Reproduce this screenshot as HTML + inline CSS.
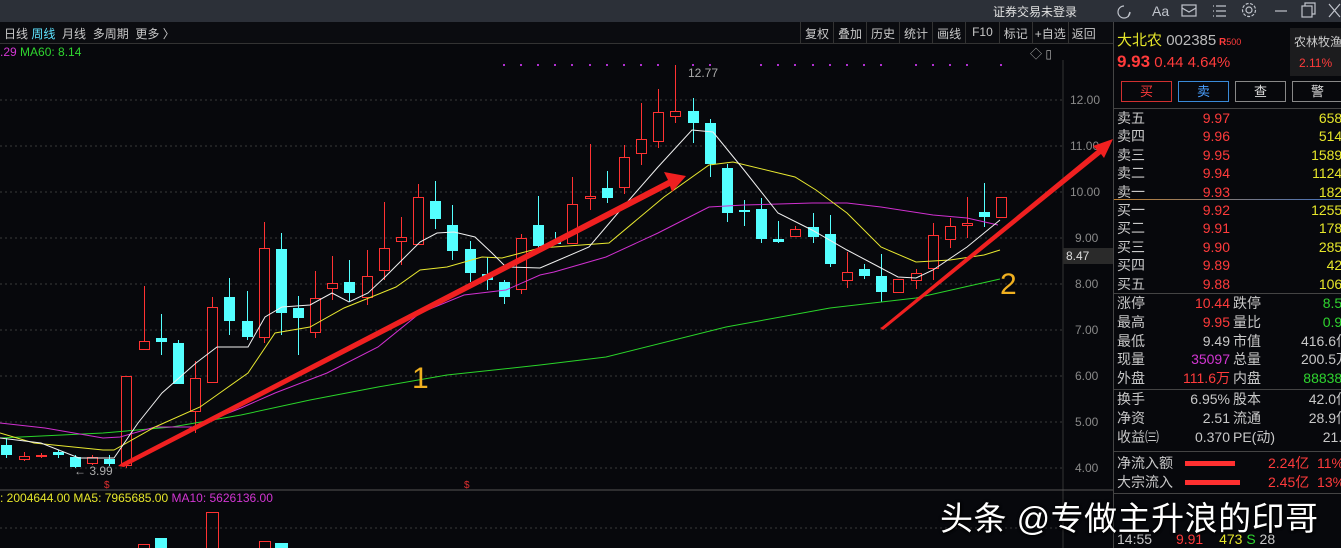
<!DOCTYPE html>
<html><head><meta charset="utf-8">
<style>
*{margin:0;padding:0;box-sizing:border-box}
body{width:1341px;height:548px;overflow:hidden;background:#07080c;font-family:"Liberation Sans","Noto Sans CJK SC",sans-serif;font-size:13px;color:#c8c8c8;position:relative}
.a{position:absolute;white-space:nowrap}
.r{text-align:right}
.red{color:#ff3b3b}.yel{color:#e6e62a}.grn{color:#2fd52f}.mag{color:#d236d2}.gry{color:#c8c8c8}
</style></head><body>
<div class="a" style="left:0;top:0;width:1341px;height:22px;background:#2c3038"></div>
<div class="a" style="left:993px;top:3px;font-size:12px;color:#e0e0e0">证券交易未登录</div>
<svg class="a" style="left:1110px;top:0" width="231" height="22" fill="none" stroke="#c0c4cc" stroke-width="1.2">
<path d="M14 6a6 6 0 1 0 6 6" /><path d="M20 12l-2 5"/>
<text x="42" y="16" fill="#c0c4cc" stroke="none" font-size="14" font-family="Liberation Sans">Aa</text>
<rect x="72" y="5" width="14" height="11"/><path d="M72 8l7 4 7-4"/>
<path d="M106 6h10M106 11h10M106 16h10M103 6h1M103 11h1M103 16h1"/>
<circle cx="139" cy="10" r="3"/><circle cx="139" cy="10" r="6.5" stroke-dasharray="3 1.5"/>
<path d="M165 11h12"/><rect x="192" y="6" width="10" height="11"/><path d="M195 6V3h10v11h-3"/>
<path d="M219 4l11 13M230 4l-11 13"/>
</svg>
<div class="a" style="left:0;top:22px;width:1113px;height:22px;background:#0b0c10;border-bottom:1px solid #333"></div>
<div class="a" style="left:4px;top:25px;font-size:12px">日线 <span style="color:#5ee3ff">周线</span> &nbsp;月线 &nbsp;多周期 &nbsp;更多 〉</div>
<div class="a" style="left:800px;top:22px;height:22px;display:flex;font-size:12px">
<span style="border-left:1px solid #333;padding:3px 4px">复权</span><span style="border-left:1px solid #333;padding:3px 4px">叠加</span><span style="border-left:1px solid #333;padding:3px 4px">历史</span><span style="border-left:1px solid #333;padding:3px 4px">统计</span><span style="border-left:1px solid #333;padding:3px 4px">画线</span><span style="border-left:1px solid #333;padding:3px 6px">F10</span><span style="border-left:1px solid #333;padding:3px 4px">标记</span><span style="border-left:1px solid #333;padding:3px 2px">+自选</span><span style="border-left:1px solid #333;padding:3px 3px">返回</span></div>
<div class="a" style="left:0;top:45px;font-size:12px"><span class="mag">.29</span> <span class="grn">MA60: 8.14</span></div>
<div class="a" style="left:1030px;top:45px;font-size:12px;color:#aaa">◇ ▯</div>

<svg class="a" style="left:0;top:44px" width="1113" height="504">
<g stroke="#3a3a3a" stroke-dasharray="2 3">
<line x1="0" y1="56" x2="1063" y2="56"/><line x1="0" y1="102" x2="1063" y2="102"/><line x1="0" y1="148" x2="1063" y2="148"/><line x1="0" y1="194" x2="1063" y2="194"/><line x1="0" y1="240" x2="1063" y2="240"/><line x1="0" y1="286" x2="1063" y2="286"/><line x1="0" y1="332" x2="1063" y2="332"/><line x1="0" y1="378" x2="1063" y2="378"/><line x1="0" y1="424" x2="1063" y2="424"/><line x1="0" y1="484" x2="1063" y2="484"/>
</g>
<line x1="1063" y1="16" x2="1063" y2="504" stroke="#333"/>
<line x1="0" y1="446" x2="1113" y2="446" stroke="#555"/>
<g fill="#8a8a8a" font-size="12" font-family="Liberation Sans">
<text x="1070" y="60">12.00</text><text x="1070" y="106">11.00</text><text x="1070" y="152">10.00</text><text x="1075" y="198">9.00</text><text x="1075" y="244">8.00</text><text x="1075" y="290">7.00</text><text x="1075" y="336">6.00</text><text x="1075" y="382">5.00</text><text x="1075" y="428">4.00</text>
</g>
<rect x="1063" y="204" width="50" height="16" fill="#2a2a2a"/><text x="1066" y="216" fill="#ddd" font-size="12" font-family="Liberation Sans">8.47</text>
<g fill="#b030d0">
<rect x="503" y="20" width="2" height="2"/><rect x="520" y="20" width="2" height="2"/><rect x="537" y="20" width="2" height="2"/><rect x="554" y="20" width="2" height="2"/><rect x="571" y="20" width="2" height="2"/><rect x="589" y="20" width="2" height="2"/><rect x="606" y="20" width="2" height="2"/><rect x="623" y="20" width="2" height="2"/><rect x="640" y="20" width="2" height="2"/><rect x="657" y="20" width="2" height="2"/><rect x="692" y="20" width="2" height="2"/><rect x="709" y="20" width="2" height="2"/><rect x="760" y="20" width="2" height="2"/><rect x="777" y="20" width="2" height="2"/><rect x="794" y="20" width="2" height="2"/><rect x="812" y="20" width="2" height="2"/><rect x="829" y="20" width="2" height="2"/><rect x="846" y="20" width="2" height="2"/><rect x="863" y="20" width="2" height="2"/><rect x="880" y="20" width="2" height="2"/><rect x="915" y="20" width="2" height="2"/><rect x="932" y="20" width="2" height="2"/><rect x="949" y="20" width="2" height="2"/><rect x="966" y="20" width="2" height="2"/><rect x="1000" y="20" width="2" height="2"/>
</g>
<text x="688" y="33" fill="#aaa" font-size="12" font-family="Liberation Sans">12.77</text>
<text x="74" y="431" fill="#aaa" font-size="12" font-family="Liberation Sans">← 3.99</text>
<text x="104" y="444" fill="#e03030" font-size="10">$</text><text x="464" y="444" fill="#e03030" font-size="10">$</text>
</svg>

<svg class="a" style="left:0;top:0" width="1113" height="548" id="c">
<g id="candles"></g>
<g fill="none" stroke-width="1">
<polyline stroke="#2ad42a" points="0,438 103,433 172,427 241,415 310,400 378,387 447,375 540,365 606,357 726,327 830,308 916,298 1000,279"/>
<polyline stroke="#d030d0" points="0,423 45,428 103,438 120,437 155,427 193,427 241,408 275,393 327,373 378,347 420,313 464,295 506,290 540,275 554,272 606,257 658,233 709,207 744,205 812,203 847,203 881,207 933,215 967,218 998,225"/>
<polyline stroke="#e8e830" points="0,433 34,443 103,450 114,450 155,427 200,407 248,373 275,333 310,327 344,308 396,287 420,270 447,267 482,257 502,258 540,248 609,243 664,197 709,165 733,162 795,177 816,190 847,213 881,247 916,262 950,260 984,255 1000,250"/>
<polyline stroke="#f0f0f0" points="0,438 41,443 79,458 114,458 138,423 162,393 196,363 217,347 248,347 265,317 282,307 310,305 332,293 349,302 368,293 385,277 402,260 420,242 437,233 454,232 475,237 492,253 506,267 540,268 554,262 589,247 623,207 658,167 692,130 713,132 744,170 778,213 812,230 847,250 881,268 898,277 916,278 933,270 967,247 1000,220"/>
</g>
<polygon fill="#f02020" points="118,466 122,463 668,180 664,172 686,176 672,192 670,186 124,467"/>
<polygon fill="#f02020" points="880,328 882,327 1097,150 1093,146 1113,139 1104,158 1101,154 883,330"/>
<text x="412" y="388" fill="#f0b020" font-size="30" font-family="Liberation Sans">1</text>
<text x="1000" y="294" fill="#f0b020" font-size="30" font-family="Liberation Sans">2</text>
<rect x="138.5" y="544.5" width="11" height="4" fill="none" stroke="#ff3232"/>
<rect x="155" y="538" width="12" height="10" fill="#54ffff"/>
<rect x="206.5" y="512.5" width="12" height="36" fill="none" stroke="#ff3232"/>
<rect x="259.5" y="541.5" width="11" height="7" fill="none" stroke="#ff3232"/>
<rect x="275" y="543" width="13" height="5" fill="#54ffff"/>
</svg>
<div class="a" style="left:0;top:491px;font-size:12px"><span class="yel">: 2004644.00 MA5: 7965685.00</span> <span class="mag">MA10: 5626136.00</span></div>

<div class="a" style="left:1113px;top:22px;width:1px;height:526px;background:#444"></div>
<div class="a" style="left:1117px;top:29px;font-size:15px"><span class="yel">大北农</span> <span style="color:#bbb">002385</span><span class="red" style="font-size:10px;font-weight:bold"> R</span><span class="red" style="font-size:9px">500</span></div>
<div class="a" style="left:1290px;top:28px;width:51px;height:48px;background:#1c1c1e"></div>
<div class="a" style="left:1294px;top:33px;font-size:12px;color:#ccc">农林牧渔</div>
<div class="a red" style="left:1299px;top:56px;font-size:12px">2.11%</div>
<div class="a red" style="left:1117px;top:52px;font-size:15px"><b style="font-size:17px">9.93</b> 0.44 4.64%</div>
<div class="a" style="left:1121px;top:81px;width:51px;height:21px;border:1px solid #d03030;color:#ff3b3b;text-align:center;line-height:19px">买</div>
<div class="a" style="left:1178px;top:81px;width:51px;height:21px;border:1px solid #3a8ad8;color:#4aa0ff;text-align:center;line-height:19px">卖</div>
<div class="a" style="left:1235px;top:81px;width:51px;height:21px;border:1px solid #888;color:#ddd;text-align:center;line-height:19px">查</div>
<div class="a" style="left:1292px;top:81px;width:51px;height:21px;border:1px solid #888;color:#ddd;text-align:center;line-height:19px">警</div>
<div class="a" style="left:1114px;top:108px;width:227px;height:1px;background:#444"></div>
<div class="a" style="left:1114px;top:199px;width:227px;height:1px;background:linear-gradient(90deg,#c08030,#4070c0)"></div>
<div class="a" style="left:1114px;top:293px;width:227px;height:1px;background:#444"></div>
<div class="a" style="left:1114px;top:389px;width:227px;height:1px;background:#444"></div>
<div class="a" style="left:1114px;top:451px;width:227px;height:1px;background:#444"></div>
<div class="a" style="left:1114px;top:493px;width:227px;height:1px;background:#444"></div>
<div class="a" style="left:1117px;top:109px;line-height:18.4px;font-size:14px">卖五<br>卖四<br>卖三<br>卖二<br>卖一</div>
<div class="a red" style="left:1190px;width:40px;top:109px;line-height:18.4px;font-size:14px;text-align:right">9.97<br>9.96<br>9.95<br>9.94<br>9.93</div>
<div class="a yel" style="left:1280px;width:70px;top:109px;line-height:18.4px;font-size:14px;text-align:right">6584<br>5142<br>15895<br>11246<br>1826</div>
<div class="a" style="left:1117px;top:201px;line-height:18.4px;font-size:14px">买一<br>买二<br>买三<br>买四<br>买五</div>
<div class="a red" style="left:1190px;width:40px;top:201px;line-height:18.4px;font-size:14px;text-align:right">9.92<br>9.91<br>9.90<br>9.89<br>9.88</div>
<div class="a yel" style="left:1280px;width:70px;top:201px;line-height:18.4px;font-size:14px;text-align:right">12556<br>1784<br>2856<br>427<br>1064</div>
<div class="a" style="left:1117px;top:294px;line-height:18.8px;font-size:14px">涨停<br>最高<br>最低<br>现量<br>外盘</div>
<div class="a r" style="left:1150px;width:80px;top:294px;line-height:18.8px;font-size:14px"><span class="red">10.44</span><br><span class="red">9.95</span><br>9.49<br><span class="mag">35097</span><br><span class="red">111.6万</span></div>
<div class="a" style="left:1233px;top:294px;line-height:18.8px;font-size:14px">跌停<br>量比<br>市值<br>总量<br>内盘</div>
<div class="a r" style="left:1270px;width:80px;top:294px;line-height:18.8px;font-size:14px"><span class="grn">8.54</span><br><span class="grn">0.92</span><br>416.6亿<br>200.5万<br><span class="grn">888384</span></div>
<div class="a" style="left:1117px;top:390px;line-height:18.8px;font-size:14px">换手<br>净资<br>收益㈢</div>
<div class="a r" style="left:1150px;width:80px;top:390px;line-height:18.8px;font-size:14px">6.95%<br>2.51<br>0.370</div>
<div class="a" style="left:1233px;top:390px;line-height:18.8px;font-size:14px">股本<br>流通<br>PE(动)</div>
<div class="a r" style="left:1270px;width:80px;top:390px;line-height:18.8px;font-size:14px">42.0亿<br>28.9亿<br>21.1</div>
<div class="a" style="left:1117px;top:454px;line-height:19px;font-size:14px">净流入额<br>大宗流入</div>
<div class="a" style="left:1185px;top:461px;width:50px;height:5px;background:#ff3030"></div>
<div class="a" style="left:1185px;top:480px;width:55px;height:5px;background:#ff3030"></div>
<div class="a red" style="left:1268px;top:454px;line-height:19px;font-size:14px">2.24亿 &nbsp;11%<br>2.45亿 &nbsp;13%</div>
<div class="a" style="left:1117px;top:531px;font-size:14px">14:55 <span class="red" style="margin-left:20px">9.91</span> <span class="yel" style="margin-left:12px">473</span> <span class="grn">S</span> 28</div>
<div class="a" style="left:940px;top:492px;font-size:33px;letter-spacing:0.5px;color:#fff;text-shadow:1px 1px 2px #000,0 0 3px #000">头条 @专做主升浪的印哥</div>

<script>
var d=[[6,445,455,438,458,'c'],[24,456,459,452,461,'r'],[41,455,456,453,458,'r'],[58,452,455,450,458,'c'],[75,457,467,455,468,'c'],[92,457,463,455,465,'r'],[109,459,464,455,466,'c'],[126,376,465,376,468,'r'],[144,341,349,286,349,'r'],[161,338,342,314,355,'c'],[178,343,384,340,384,'c'],[195,378,411,361,433,'r'],[212,307,382,297,382,'r'],[229,297,321,278,335,'c'],[247,321,337,291,340,'c'],[264,248,337,222,343,'r'],[281,249,313,233,335,'c'],[298,308,318,296,355,'c'],[315,298,332,271,338,'r'],[332,283,288,256,300,'r'],[349,282,293,260,302,'c'],[367,276,297,250,305,'r'],[384,248,270,202,280,'r'],[401,237,241,217,265,'r'],[418,197,244,184,244,'r'],[435,201,219,181,229,'c'],[452,225,251,205,260,'c'],[470,249,273,241,282,'c'],[487,274,280,257,290,'c'],[504,282,297,280,304,'c'],[521,238,289,234,294,'r'],[538,225,246,196,250,'c'],[555,241,244,232,244,'c'],[572,204,243,177,243,'r'],[590,196,198,144,210,'r'],[607,188,198,171,203,'c'],[624,157,187,145,194,'r'],[641,139,153,103,165,'r'],[658,112,141,89,148,'r'],[675,111,116,65,123,'r'],[693,111,123,98,143,'c'],[710,123,164,119,177,'c'],[727,168,213,164,222,'c'],[744,210,212,200,226,'c'],[761,209,239,198,243,'c'],[778,239,242,221,243,'c'],[795,229,236,226,236,'r'],[813,227,237,213,243,'c'],[830,234,264,215,267,'c'],[847,272,280,252,288,'r'],[864,269,276,264,279,'c'],[881,276,292,254,302,'c'],[898,279,292,279,293,'r'],[916,273,280,269,289,'r'],[933,235,268,223,280,'r'],[950,226,239,218,248,'r'],[967,223,225,197,238,'r'],[984,212,217,183,227,'c'],[1001,197,217,197,217,'r']];
var s='';d.forEach(function(k){var x=k[0],col=k[5]=='c'?'#54ffff':'#ff3232';
s+='<line x1="'+(x+.5)+'" y1="'+k[3]+'" x2="'+(x+.5)+'" y2="'+k[4]+'" stroke="'+col+'"/>';
if(k[5]=='c')s+='<rect x="'+(x-5)+'" y="'+k[1]+'" width="11" height="'+Math.max(2,k[2]-k[1])+'" fill="'+col+'"/>';
else s+='<rect x="'+(x-4.5)+'" y="'+(k[1]+.5)+'" width="10" height="'+Math.max(1,k[2]-k[1])+'" fill="#07080c" stroke="'+col+'"/>';});
document.getElementById('candles').innerHTML=s;
</script>
</body></html>
